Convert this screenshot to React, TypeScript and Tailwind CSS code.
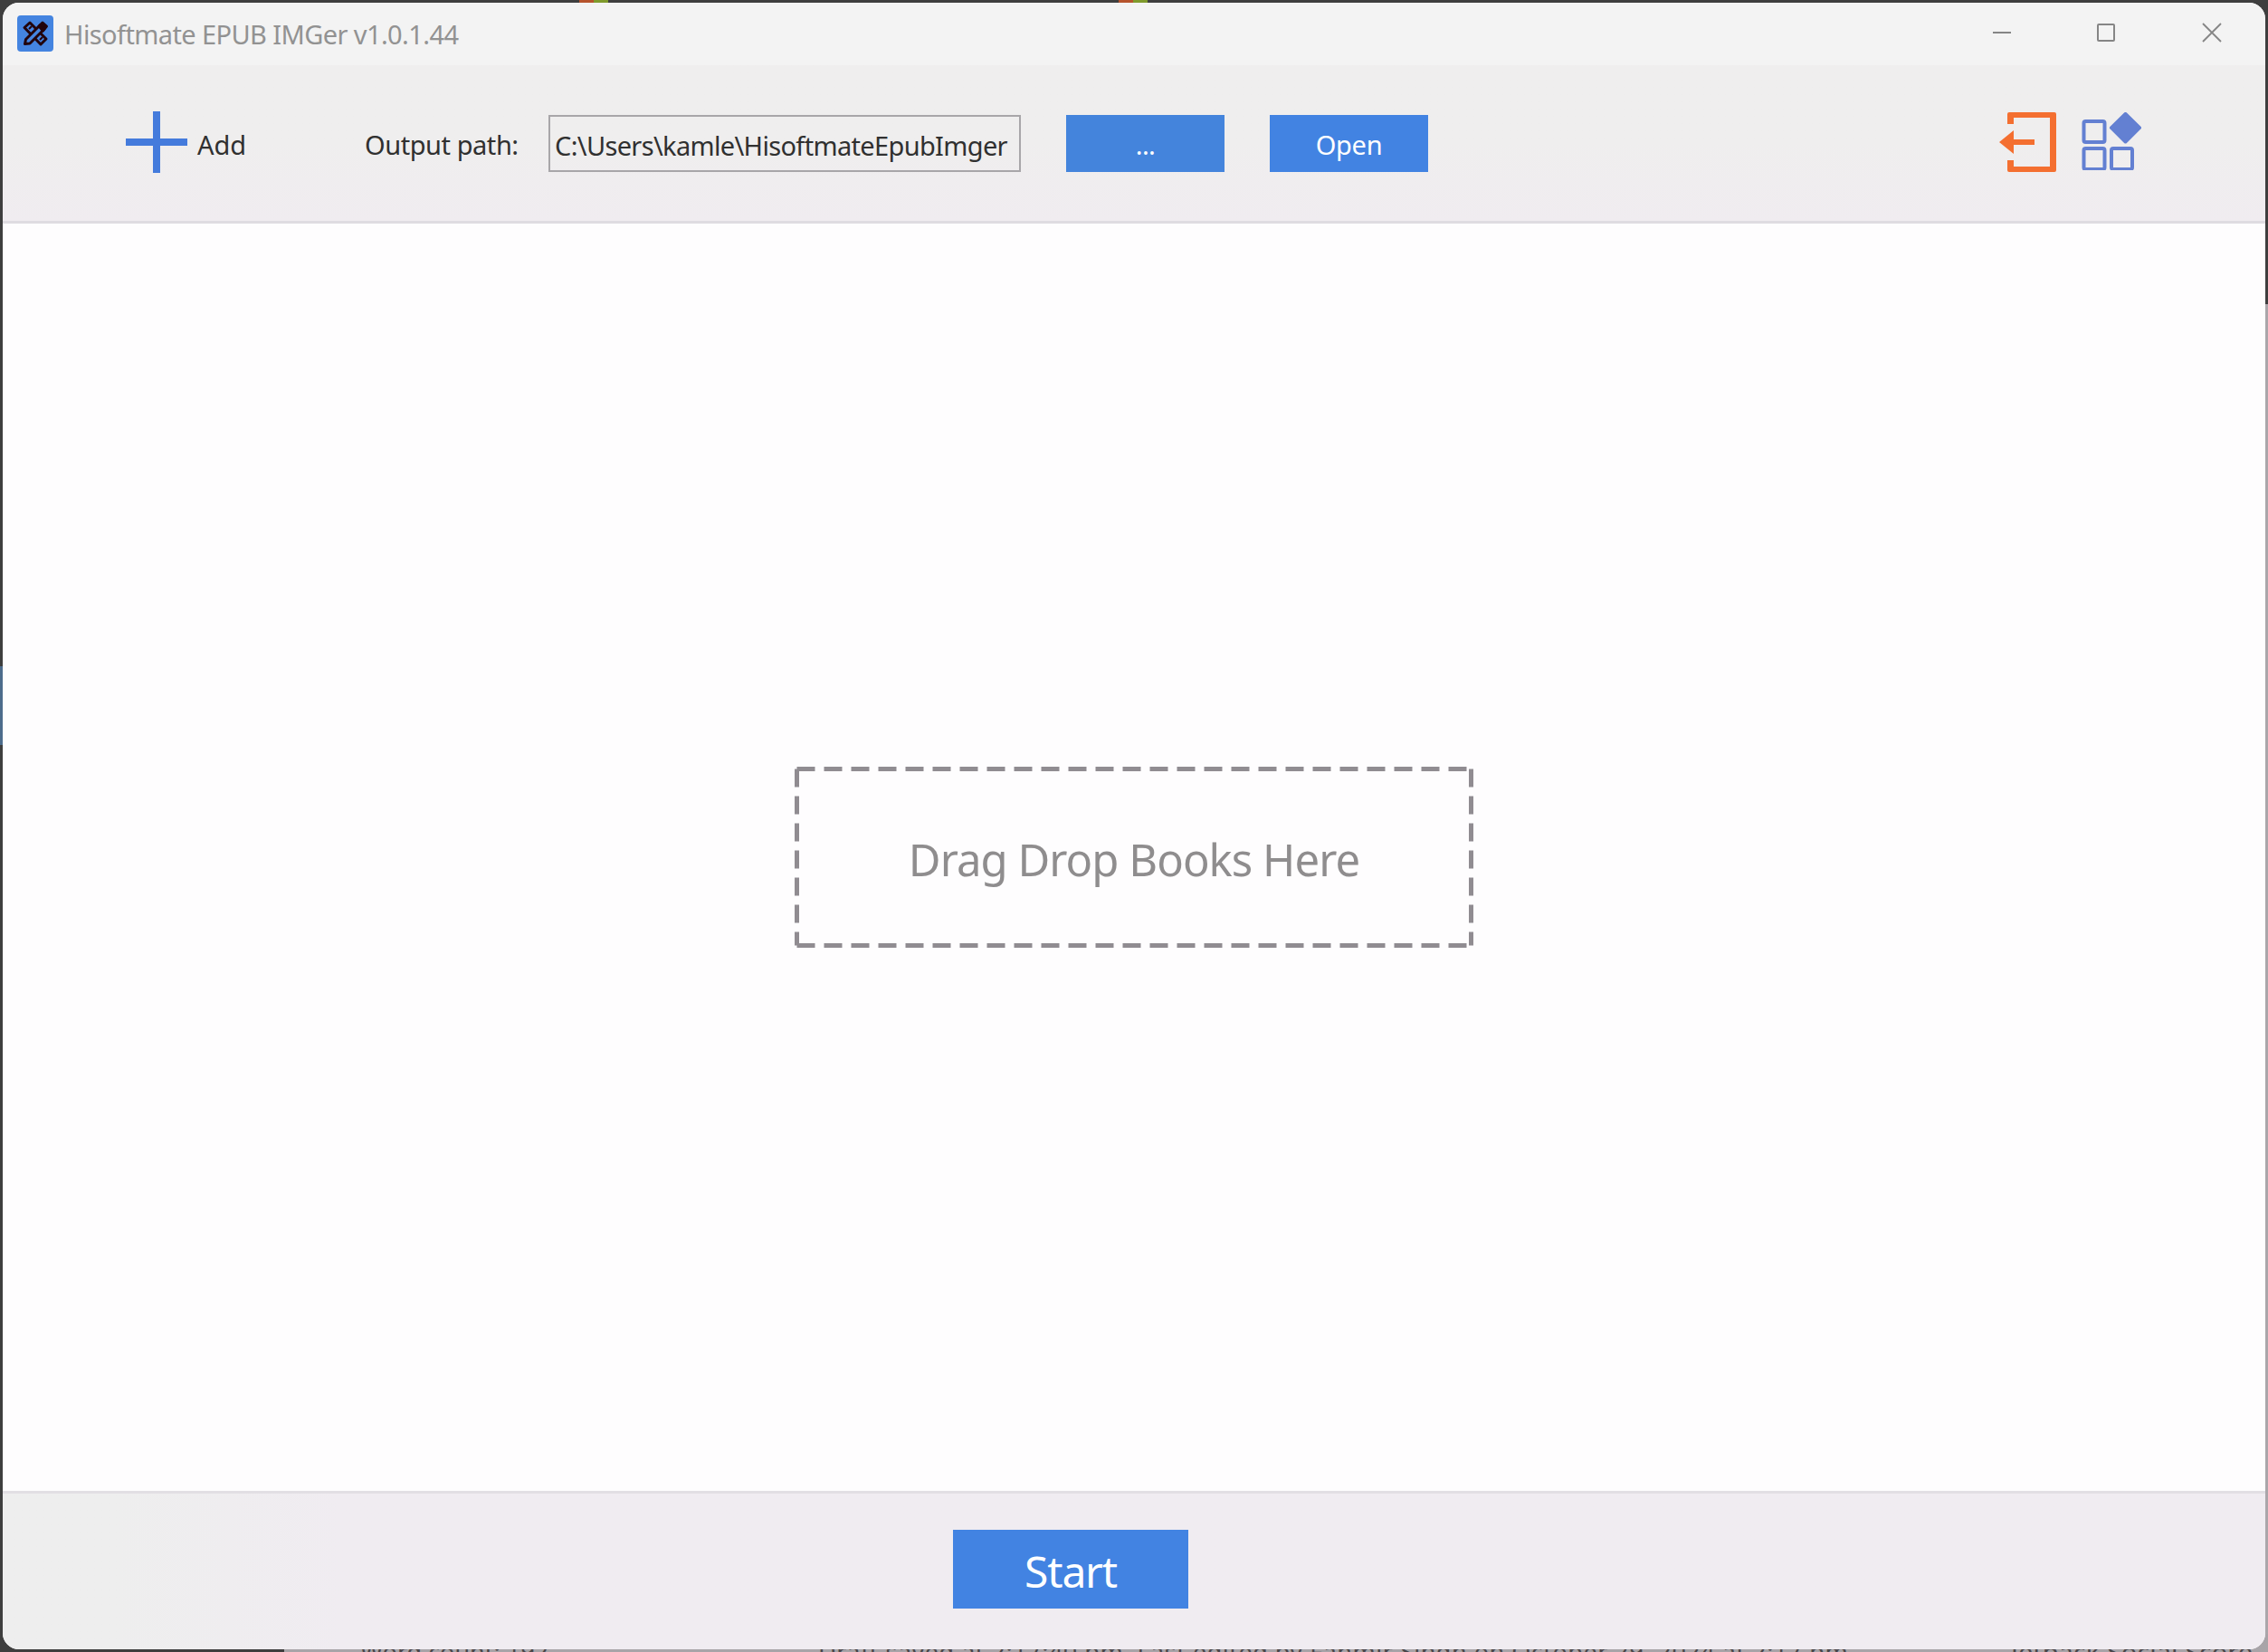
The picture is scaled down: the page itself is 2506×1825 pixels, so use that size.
import { useState } from "react"

function AppLogo() {
  return (
    <svg width="40" height="40" viewBox="0 0 40 40" className="shrink-0">
      <rect width="40" height="40" rx="4" fill="#4484e0" />
      <g fill="#4484e0" stroke="#22040c" strokeWidth="3" strokeLinejoin="round">
        <path d="M8 13.500l6-5.500 18 18-6 6z" />
        <path d="M13 15l3-3M25 27l3-3" fill="none" strokeWidth="2" />
        <path d="M8.500 31.500l1-5 16-16 4.500 4.500-16 16z" />
        <path d="M24 12l4-4 4.500 4-4 5z" fill="#22040c" />
      </g>
    </svg>
  )
}

function ExitIcon() {
  return (
    <svg width="63" height="66" viewBox="0 0 63 66" fill="#f46f30">
      <path d="M9 13V2a2 2 0 0 1 2-2H61a2 2 0 0 1 2 2V64a2 2 0 0 1-2 2H11a2 2 0 0 1-2-2V53h7v7H56V6H16v7z" />
      <path d="M0 33L16 20v10h23v6H16v10z" />
    </svg>
  )
}

function AppsIcon() {
  return (
    <svg width="66" height="64" viewBox="0 0 66 64" fill="none" stroke="#6380d2" strokeWidth="4">
      <rect x="2.500" y="10" width="23" height="23" rx="2" />
      <rect x="2.500" y="40" width="23" height="23" rx="2" />
      <rect x="33" y="40" width="23" height="23" rx="2" />
      <path d="M48.500 2L64 17.200L48.500 32.500L33 17.200z" fill="#6380d2" strokeLinejoin="round" />
    </svg>
  )
}

function TitleBar() {
  return (
    <div className="flex h-[69px] shrink-0 items-start justify-between bg-[#f3f3f3] pl-4 pr-[48px]">
      <div className="flex items-center gap-3 pt-[13px]">
        <AppLogo />
        <span className="pt-0.5 text-[29px] leading-10 tracking-[-0.6px] text-[#929292]">Hisoftmate EPUB IMGer v1.0.1.44</span>
      </div>
      <div className="flex gap-[94px] pt-[22px] text-[#858585]">
        <svg width="22" height="22" viewBox="0 0 22 22" stroke="currentColor" strokeWidth="2">
          <path d="M1 11h20" />
        </svg>
        <svg width="22" height="22" viewBox="0 0 22 22" fill="none" stroke="currentColor" strokeWidth="2">
          <rect x="1" y="2" width="18" height="18" rx="1" />
        </svg>
        <svg width="22" height="22" viewBox="0 0 22 22" stroke="currentColor" strokeWidth="1.800">
          <path d="M1 1l20 20M21 1L1 21" />
        </svg>
      </div>
    </div>
  )
}

function Toolbar({ path }: { path: string }) {
  return (
    <div className="flex h-[175px] shrink-0 items-start border-b-[3px] border-[#dfdce1] bg-linear-to-b from-[#efeeee] from-50% to-[#f0ecf0] pl-[136px] pr-[137px] pt-[51px] text-[29px] text-[#303030]">
      <button className="flex w-[264px] items-start">
        <svg width="68" height="68" viewBox="0 0 68 68" stroke="#447bdc" strokeWidth="8">
          <path d="M34 0v68M0 34h68" />
        </svg>
        <span className="ml-[11px] mt-[17px] leading-10">Add</span>
      </button>
      <span className="mt-[17px] w-[203px] leading-10 tracking-[-0.45px]">Output path:</span>
      <div className="mt-1 flex h-[63px] w-[522px] items-center whitespace-nowrap border-2 border-[#a8a6a9] pl-[5px] pt-[4px] tracking-[-0.66px]">
        {path}
      </div>
      <button className="ml-[50px] mt-1 h-[63px] w-[175px] bg-[#4484dc] pt-[3px] tracking-[-0.6px] text-white">...</button>
      <button className="ml-[50px] mt-1 h-[63px] w-[175px] bg-[#4283e2] pt-[3px] tracking-[-0.3px] text-white">Open</button>
      <div className="ml-auto flex gap-7 pt-px">
        <ExitIcon />
        <AppsIcon />
      </div>
    </div>
  )
}

function DropZone() {
  return (
    <div className="relative flex h-[200px] w-[750px] items-center justify-center">
      <svg className="absolute inset-0" width="750" height="200" fill="none" stroke="#908c91" strokeWidth="5">
        <path d="M2.500 2.500H747.500" strokeDasharray="20 10" />
        <path d="M2.500 197.500H747.500" strokeDasharray="20 10" />
        <path d="M2.500 2.500V197.500" strokeDasharray="20 10" />
        <path d="M747.500 2.500V197.500" strokeDasharray="20 10" />
      </svg>
      <span className="pt-1.5 text-[49px] tracking-[-0.95px] text-[#8f8d8e]">Drag Drop Books Here</span>
    </div>
  )
}

// slivers of the desktop that show around the window
function Desktop() {
  return (
    <div className="absolute inset-0 overflow-hidden">
      <div className="absolute left-[640px] top-0 h-[3px] w-4 bg-[#b5532c]" />
      <div className="absolute left-[656px] top-0 h-[3px] w-4 bg-[#7f9a2c]" />
      <div className="absolute left-[1236px] top-0 h-[3px] w-4 bg-[#b5532c]" />
      <div className="absolute left-[1252px] top-0 h-[3px] w-4 bg-[#7f9a2c]" />
      <div className="absolute left-0 top-[736px] h-[87px] w-[3px] bg-[#4d6c8c]" />
      <div className="absolute bottom-0 right-0 top-[336px] w-8 bg-[#aaa6aa]" />
      <div className="absolute bottom-0 left-[314px] right-0 h-5 bg-[#a8a4a8]" />
      <div className="absolute left-[398px] top-[1813px] whitespace-nowrap text-[27px] leading-6 text-[#4a474a]">Word count: 192</div>
      <div className="absolute left-[904px] top-[1813px] whitespace-nowrap text-[27px] leading-6 tracking-[0.5px] text-[#4a474a]">
        Draft saved at 2:17:40 pm. Last edited by Fahmir Singh on October 29, 2024 at 2:17 pm
      </div>
      <div className="absolute left-[2222px] top-[1813px] whitespace-nowrap text-[29px] leading-6 text-[#4a474a]">Jetpack Social Score</div>
    </div>
  )
}

export default function App() {
  const [path] = useState("C:\\Users\\kamle\\HisoftmateEpubImger")

  return (
    <div className="relative h-[1825px] w-[2506px] bg-[#3e3e3e] p-[3px] font-['Noto_Sans',sans-serif]">
      <Desktop />
      <div className="relative flex h-[1819px] w-[2500px] flex-col overflow-hidden rounded-[18px] bg-[#fefdfe]">
        <TitleBar />
        <Toolbar path={path} />
        <main className="flex flex-1 justify-center pt-[600px]">
          <DropZone />
        </main>
        <footer className="flex h-[175px] shrink-0 border-t-[3px] border-[#e2dfe4] bg-linear-to-r from-[#eeeeee] from-5% to-[#f0ecf1] to-15% pl-[1050px] pt-10">
          <button className="h-[87px] w-[260px] bg-[#4283e2] pt-1 text-[48px] leading-none tracking-[-1.2px] text-white">Start</button>
        </footer>
      </div>
    </div>
  )
}
